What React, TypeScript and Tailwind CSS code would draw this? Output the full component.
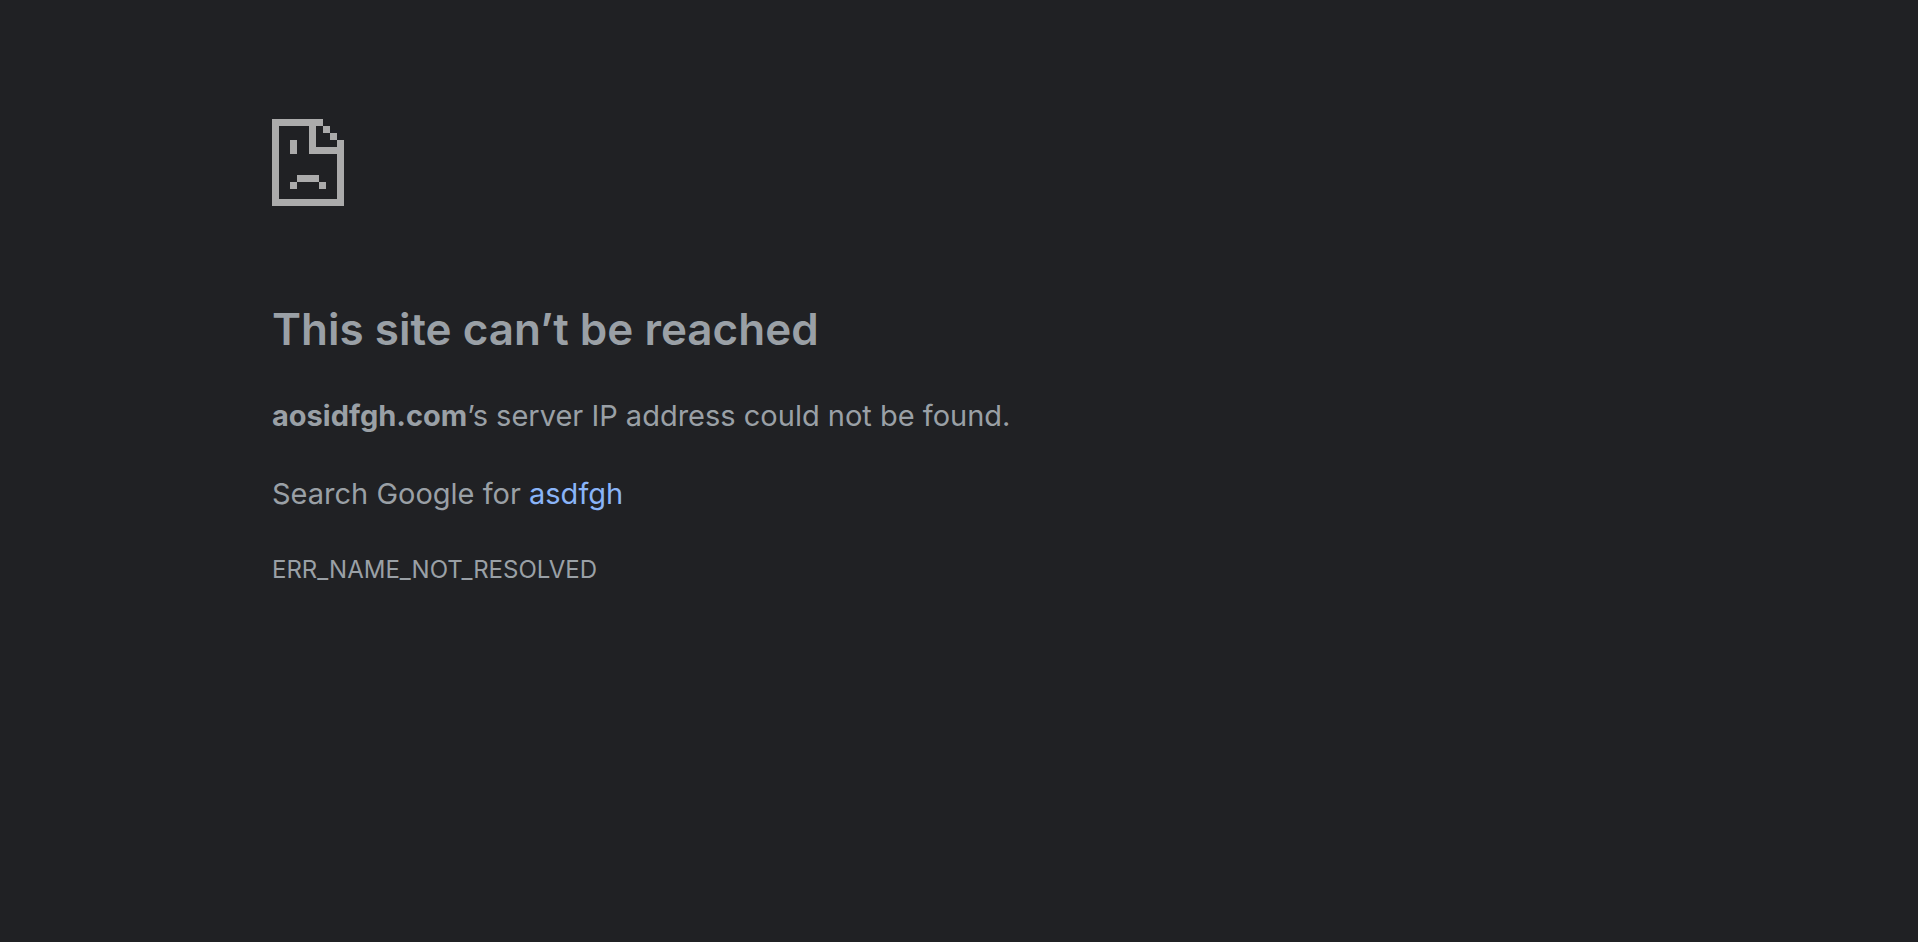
import React from "react";

interface ErrorPageProps {
  host: string;
  suggestion: string;
  code: string;
}

const SadPageIcon: React.FC = () => {
  return (
    <svg
      width="72"
      height="87"
      viewBox="0 0 72 87"
      fill="#ababab"
      shapeRendering="crispEdges"
      aria-hidden="true"
    >
      {/* page outline */}
      <path d="M0 0H51V7H7V80H65V35H37V7H44V28H65V21H72V87H0Z" />
      {/* folded corner */}
      <path d="M51 7H58V14H51ZM58 14H65V21H58Z" />
      {/* eye and mouth */}
      <path d="M18 21H25V35H18ZM25 56H47V63H25ZM18 63H25V70H18ZM47 63H54V70H47Z" />
    </svg>
  );
};

const ErrorPage: React.FC<ErrorPageProps> = ({ host, suggestion, code }) => {
  return (
    <main className="px-68 pt-[119px] pb-16">
      <SadPageIcon />
      <h1 className="mt-24 text-[44px] leading-[54px] font-semibold">
        This site can’t be reached
      </h1>
      <p className="mt-9 text-[29px] leading-12">
        <strong className="font-bold">{host}</strong>’s server IP address could
        not be found.
      </p>
      <p className="mt-[30px] text-[29px] leading-12">
        Search Google for{" "}
        <a href="#search" className="text-[#8ab4f8] hover:underline">
          {suggestion}
        </a>
      </p>
      <p className="mt-8 text-[24px] leading-10">{code}</p>
    </main>
  );
};

const App: React.FC = () => {
  return (
    <div className="min-h-screen bg-[#202124] font-['Inter','Liberation_Sans',sans-serif] text-[#9aa0a6]">
      <ErrorPage
        host="aosidfgh.com"
        suggestion="asdfgh"
        code="ERR_NAME_NOT_RESOLVED"
      />
    </div>
  );
};

export default App;
